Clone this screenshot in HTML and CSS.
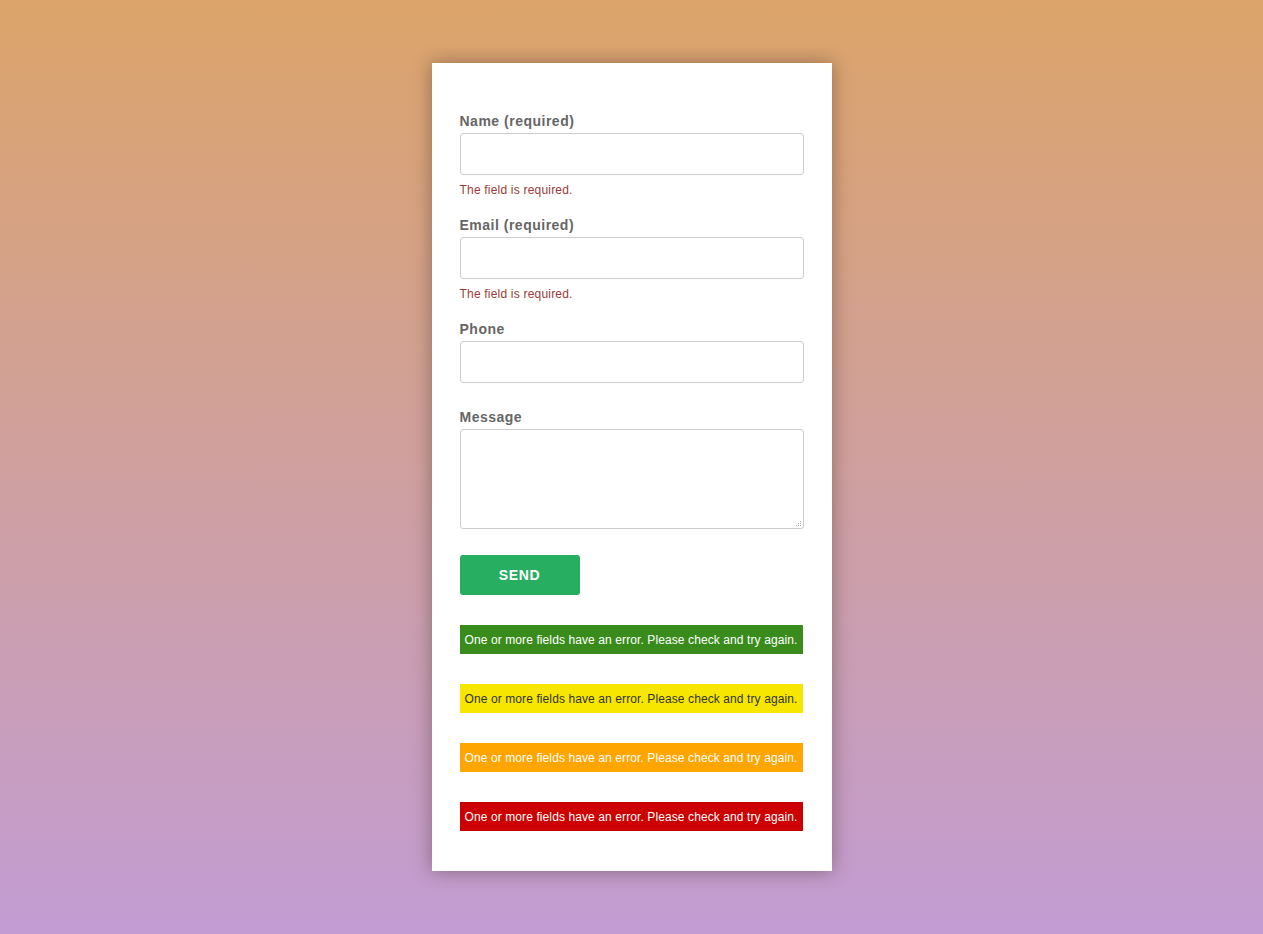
FILE: index.html
```html
<!DOCTYPE html>
<html lang="en">
<head>
<meta charset="utf-8">
<title>Contact form</title>
<link rel="stylesheet" href="styles.css">
</head>
<body>
<main class="card">
  <form class="form" novalidate>
    <div class="field has-error">
      <label class="label" for="name">Name (required)</label>
      <input class="input" id="name" type="text">
      <span class="tip">The field is required.</span>
    </div>
    <div class="field has-error">
      <label class="label" for="email">Email (required)</label>
      <input class="input" id="email" type="email">
      <span class="tip">The field is required.</span>
    </div>
    <div class="field">
      <label class="label" for="phone">Phone</label>
      <input class="input" id="phone" type="tel">
    </div>
    <div class="field field-msg">
      <label class="label" for="message">Message</label>
      <div class="textarea-wrap">
        <textarea class="textarea" id="message"></textarea>
        <svg class="grip" width="7" height="7" viewBox="0 0 7 7" aria-hidden="true">
          <rect x="5" y="1" width="1" height="1"/>
          <rect x="3" y="3" width="1" height="1"/>
          <rect x="5" y="3" width="1" height="1"/>
          <rect x="1" y="5" width="1" height="1"/>
          <rect x="3" y="5" width="1" height="1"/>
          <rect x="5" y="5" width="1" height="1"/>
        </svg>
      </div>
    </div>
    <button class="send" type="button">SEND</button>
    <div class="response green">One or more fields have an error. Please check and try again.</div>
    <div class="response yellow">One or more fields have an error. Please check and try again.</div>
    <div class="response orange">One or more fields have an error. Please check and try again.</div>
    <div class="response red">One or more fields have an error. Please check and try again.</div>
  </form>
</main>
</body>
</html>
```

FILE: styles.css
```css
html, body {
  margin: 0;
  padding: 0;
}
body {
  min-height: 934px;
  box-sizing: border-box;
  padding-top: 63px;
  background: linear-gradient(to bottom, #dca46a 0%, #c29cd3 100%);
  font-family: "Liberation Sans", Arial, sans-serif;
}
.card {
  width: 400px;
  box-sizing: border-box;
  margin: 0 auto;
  background: #fff;
  padding: 49px 28px 40px;
  box-shadow: 0 0 18px rgba(60, 40, 30, 0.45);
}
.form {
  display: flex;
  flex-direction: column;
}
.field {
  display: flex;
  flex-direction: column;
  margin-bottom: 25px;
}
.field.has-error {
  margin-bottom: 19px;
}
.field-msg {
  margin-bottom: 26px;
}
.label {
  font-size: 14px;
  font-weight: bold;
  color: #666;
  line-height: 18px;
  letter-spacing: 0.5px;
  margin-bottom: 3px;
  padding-top: 1px;
  margin-top: -1px;
}
.input, .textarea {
  display: block;
  width: 344px;
  box-sizing: border-box;
  border: 1px solid #ccc;
  border-radius: 3px;
  background: #fff;
  margin: 0;
  font-family: inherit;
  font-size: 13px;
}
.input {
  height: 42px;
}
.textarea-wrap {
  position: relative;
  width: 344px;
  height: 100px;
}
.textarea {
  height: 100px;
  resize: none;
}
.grip {
  position: absolute;
  right: 2px;
  bottom: 2px;
  fill: #a8a8a8;
  pointer-events: none;
}
.tip {
  display: block;
  margin-top: 7px;
  margin-bottom: -1px;
  font-size: 12px;
  line-height: 16px;
  letter-spacing: 0.2px;
  color: #9c3a3a;
}
.send {
  width: 120px;
  height: 40px;
  border: 0;
  border-radius: 3px;
  background: #27ae60;
  color: #fff;
  font-family: inherit;
  font-weight: bold;
  font-size: 14px;
  letter-spacing: 0.6px;
  padding: 0;
  margin-bottom: 30px;
}
.response {
  width: 343px;
  height: 29px;
  box-sizing: border-box;
  padding: 0 5px;
  font-size: 12px;
  line-height: 30px;
  letter-spacing: 0.1px;
  white-space: nowrap;
  overflow: hidden;
  margin-bottom: 30px;
}
.response:last-child {
  margin-bottom: 0;
}
.green { background: #398c1c; color: #fff; }
.yellow { background: #f6e600; color: #333; }
.orange { background: #ffa500; color: #fff; }
.red { background: #cc0000; color: #fff; }
```
